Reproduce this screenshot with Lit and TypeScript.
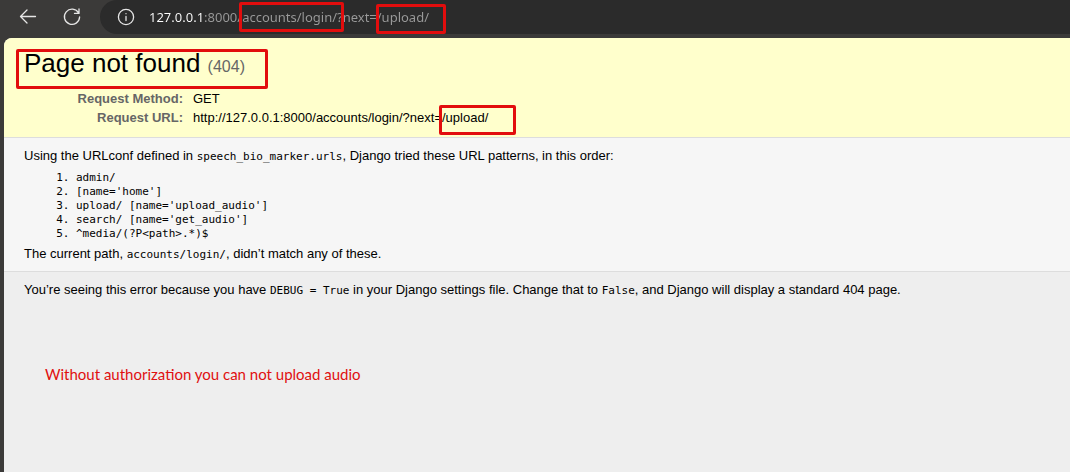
import { LitElement, html, css } from "lit";
import { customElement, property } from "lit/decorators.js";

@customElement("browser-toolbar")
class BrowserToolbar extends LitElement {
  @property() url = "";

  static styles = css`
    :host { display: flex; align-items: flex-start; height: 38px; background: #3b3a39; }
    .nav { display: flex; flex: none; gap: 20px; padding: 5px 16px 0; width: 100px; box-sizing: border-box; }
    button { width: 24px; height: 24px; padding: 0; border: 0; background: none; flex: none; }
    svg { display: block; width: 24px; height: 24px; fill: none; stroke: #e6e6e6; stroke-width: 1.3; stroke-linecap: round; stroke-linejoin: round; }
    .address { display: flex; flex: 1; min-width: 0; height: 34px; box-sizing: border-box; padding: 5px 0 5px 14px; gap: 11px; background: #2b2b2b; border-radius: 17px 0 0 17px; }
    input {
      flex: 1; min-width: 0; height: 24px; padding: 0; border: 0; outline: 0;
      font: 13px/24px "Noto Sans", "Open Sans", sans-serif;
      color: transparent;
      background: linear-gradient(90deg, #ffffff 55px, #9a9a9a 55px);
      -webkit-background-clip: text; background-clip: text;
    }
  `;

  render() {
    return html`
      <div class="nav">
        <button aria-label="Back">
          <svg viewBox="0 0 24 24"><path d="M19.5 11.5H4.5M11 5L4.5 11.5L11 18" /></svg>
        </button>
        <button aria-label="Refresh">
          <svg viewBox="0 0 24 24"><path d="M18.6 8A7.6 7.6 0 1 0 19.6 12M19 4V8.4H14.5" /></svg>
        </button>
      </div>
      <div class="address">
        <button aria-label="Site information">
          <svg viewBox="0 0 24 24"><circle cx="12" cy="12" r="7.6" /><path d="M12 11.5V15.5M12 8.6V8.7" /></svg>
        </button>
        <input type="text" aria-label="Address" .value=${this.url} />
      </div>
    `;
  }
}

@customElement("app-root")
class AppRoot extends LitElement {
  static styles = css`
    :host { display: block; position: relative; min-height: 100vh; overflow: hidden; background: #3b3a39; font: 13px/18px "Liberation Sans", Arial, sans-serif; color: #000; }
    .page { margin-left: 4px; min-height: calc(100vh - 38px); background: #eee; border-top-left-radius: 8px; overflow: hidden; }
    .summary { background: #ffffcc; border-bottom: 1px solid #ddd; padding: 10px 20px; }
    h1 { margin: 0 0 7px; font-size: 26px; line-height: 30px; font-weight: 400; }
    h1 small { font-size: 16px; color: #666; }
    table { border-collapse: collapse; }
    th, td { padding: 0; height: 19px; line-height: 19px; text-align: left; }
    th { width: 159px; padding-right: 10px; text-align: right; color: #666; }
    .info { background: #f6f6f6; border-bottom: 1px solid #ddd; padding: 9px 20px 8px; }
    p { margin: 0; }
    code, ol { font-family: "DejaVu Sans Mono", monospace; font-size: 11px; }
    code { line-height: 14px; }
    ol { margin: 6px 0 4px; padding-left: 52px; line-height: 14px; }
    .explanation { padding: 9px 20px; }
    .note { margin: 64px 0 0 21px; font: 15px/22px Lato, sans-serif; color: #e01010; }
    .mark { position: absolute; box-sizing: border-box; border: 3px solid #e20d0d; border-radius: 2px; pointer-events: none; }
    .mark-path { left: 239px; top: 2px; width: 105px; height: 30px; }
    .mark-next { left: 376px; top: 4px; width: 70px; height: 30px; }
    .mark-title { left: 16px; top: 49px; width: 252px; height: 40px; }
    .mark-target { left: 439px; top: 105px; width: 77px; height: 30px; }
  `;

  private patterns = [
    "admin/",
    "[name='home']",
    "upload/ [name='upload_audio']",
    "search/ [name='get_audio']",
    "^media/(?P<path>.*)$",
  ];

  render() {
    return html`
      <browser-toolbar url="127.0.0.1:8000/accounts/login/?next=/upload/"></browser-toolbar>
      <main class="page">
        <header class="summary">
          <h1>Page not found <small>(404)</small></h1>
          <table>
            <tr><th scope="row">Request Method:</th><td>GET</td></tr>
            <tr><th scope="row">Request URL:</th><td>http://127.0.0.1:8000/accounts/login/?next=/upload/</td></tr>
          </table>
        </header>
        <section class="info">
          <p>Using the URLconf defined in <code>speech_bio_marker.urls</code>, Django tried these URL patterns, in this order:</p>
          <ol>${this.patterns.map((p) => html`<li>${p}</li>`)}</ol>
          <p>The current path, <code>accounts/login/</code>, didn’t match any of these.</p>
        </section>
        <section class="explanation">
          <p>You’re seeing this error because you have <code>DEBUG = True</code> in your Django settings file. Change that to <code>False</code>, and Django will display a standard 404 page.</p>
          <p class="note">Without authorization you can not upload audio</p>
        </section>
      </main>
      <div class="mark mark-path"></div>
      <div class="mark mark-next"></div>
      <div class="mark mark-title"></div>
      <div class="mark mark-target"></div>
    `;
  }
}
